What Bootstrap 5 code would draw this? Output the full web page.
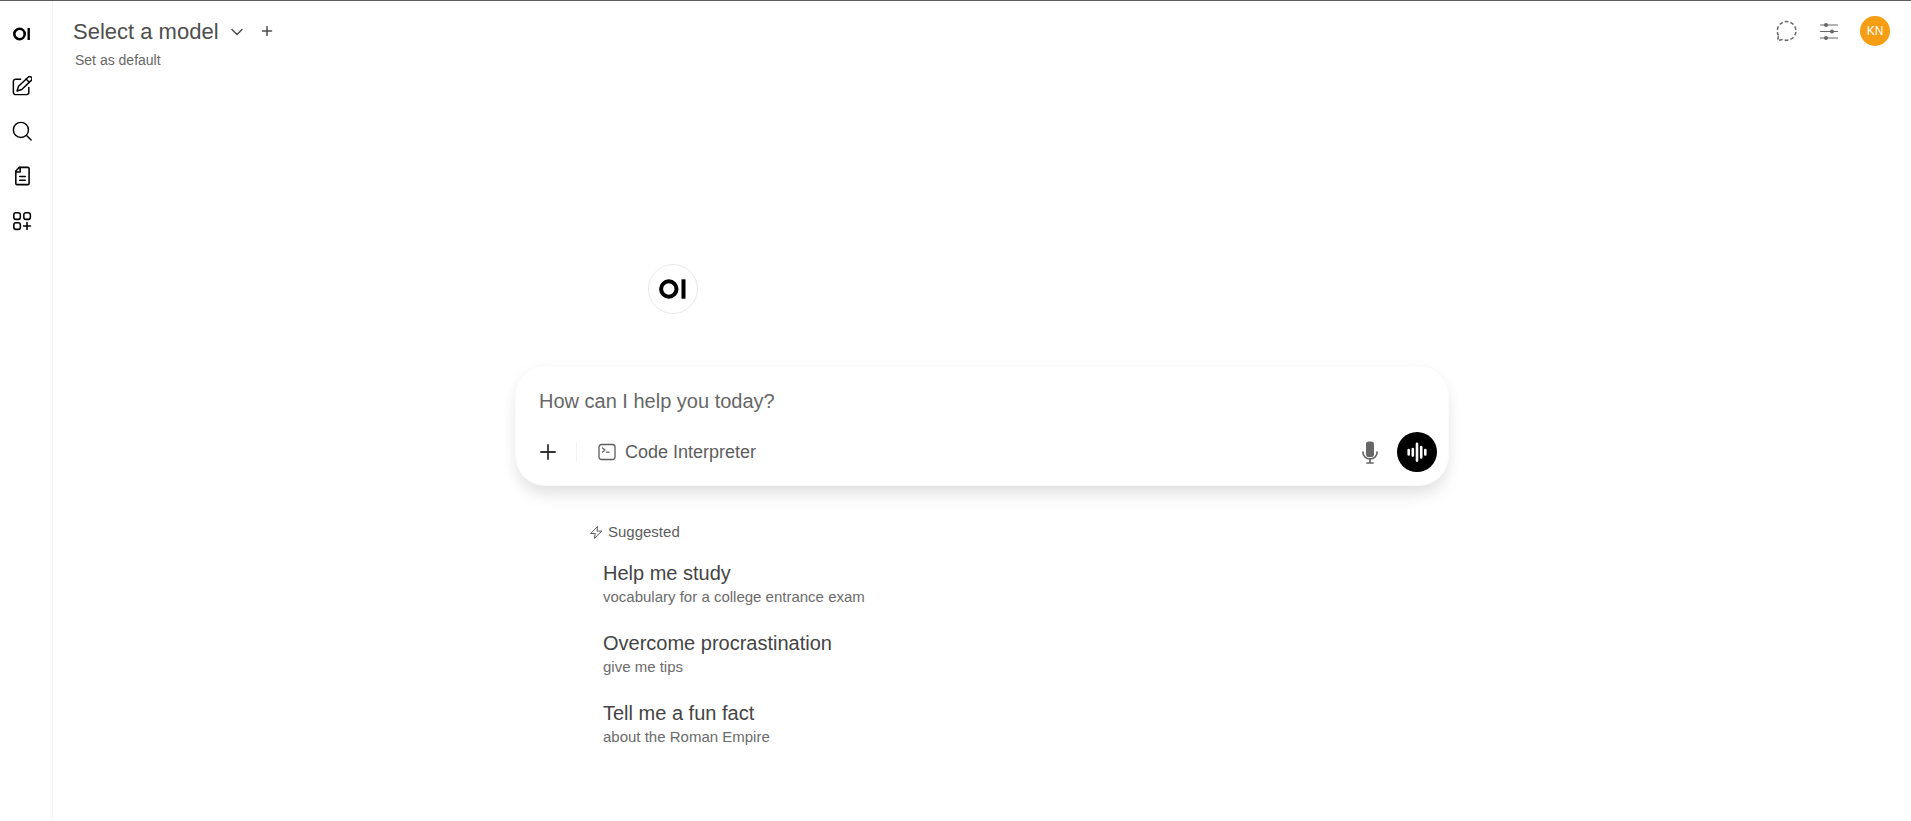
<!DOCTYPE html>
<html lang="en">
<head>
<meta charset="utf-8">
<meta name="viewport" content="width=device-width, initial-scale=1">
<title>New chat</title>
<link href="https://cdn.jsdelivr.net/npm/bootstrap@5.3.0/dist/css/bootstrap.min.css" rel="stylesheet">
<style>
body { font-family: "Liberation Sans", Arial, sans-serif; color: #4e4e4e; background: #fff; }
.app-shell { border-top: 1px solid #5c5c58; }
.side-rail { width: 53px; padding: 16px 8px 0 0; border-right: 1px solid #f5f5f5; }
.rail-nav { gap: 9px; }
.plain-btn { display: flex; align-items: center; justify-content: center; padding: 0; border: 0; background: none; color: inherit; text-decoration: none; }
.rail-item { width: 36px; height: 36px; color: #000; }
.rail-logo { height: 34px; margin-bottom: 8px; }
.top-bar { padding: 15px 21px 0 20px; }
.model-btn { font-size: 22px; line-height: 32px; gap: 12px; }
.add-model { margin-left: 18px; }
.default-btn { font-size: 14px; line-height: 20px; margin: 2px 0 0 2px; color: #676767; }
.top-actions { gap: 21px; color: #676767; }
.avatar { width: 30px; height: 30px; background: #f59e13; color: #fff; font-size: 12px; }
.chat-col { width: 100%; max-width: 934px; margin-top: 194px; }
.brand-mark { width: 50px; height: 50px; margin: 0 0 51px 133px; border: 1px solid #e9e9e9; }
.prompt-box { height: 121px; padding: 19px 11px 13px 23px; border: 1px solid #fafafa; border-radius: 30px; box-shadow: 0 12px 18px -4px rgba(0,0,0,.1), 0 4px 16px rgba(0,0,0,.04); background: #fff; }
.prompt-input { width: 100%; height: 32px; padding: 0; border: 0; outline: 0; resize: none; font-size: 20px; line-height: 32px; overflow: hidden; color: #4e4e4e; }
.prompt-input::placeholder { color: #676767; opacity: 1; }
.tool-divider { width: 1px; height: 20px; margin: 0 21px 0 19px; background: #f3f3f3; }
.tool-btn { gap: 9px; font-size: 18px; line-height: 24px; color: #5d5d5d; }
.mic-btn { margin-right: 18px; color: #676767; }
.voice-btn { width: 40px; height: 40px; background: #000; color: #fff; }
.suggest-area { padding: 36px 75px 0; }
.suggest-head { gap: 5px; font-size: 15px; line-height: 20px; color: #5d5d5d; }
.suggest-list { padding: 18px 0 0 13px; gap: 22px; }
.suggest-item { display: block; width: 100%; padding: 0; border: 0; background: none; text-align: left; }
.suggest-title { font-size: 20px; line-height: 26px; color: #444; }
.suggest-sub { font-size: 15px; line-height: 22px; color: #6b6b6b; }
</style>
</head>
<body>
<div class="app-shell d-flex min-vh-100">
  <aside class="side-rail flex-shrink-0">
    <nav class="rail-nav d-flex flex-column align-items-center" aria-label="Sidebar">
      <a href="#" class="plain-btn rail-item rail-logo" aria-label="Home">
        <svg width="18" height="14" viewBox="0 0 18 14" fill="none" stroke="#000" stroke-width="2.6"><circle cx="6.500" cy="7" r="5.200"/><path d="M15.700 1v12" stroke-width="2.4"/></svg>
      </a>
      <a href="#" class="plain-btn rail-item" aria-label="New chat">
        <svg width="20" height="20" viewBox="1 1 22 22" fill="none" stroke="currentColor" stroke-width="1.600" stroke-linecap="round" stroke-linejoin="round"><path d="M10.500 4.500H5a2.500 2.500 0 0 0-2.500 2.500v12A2.500 2.500 0 0 0 5 21.500h12a2.500 2.500 0 0 0 2.500-2.500v-5.500"/><path d="m18.700 2.300-10.500 10L6.500 17.500l5.200-1.700 10.500-10a2.470 2.470 0 0 0-3.500-3.500Z"/><path d="m16.500 4.300 3.500 3.500"/></svg>
      </a>
      <button type="button" class="plain-btn rail-item" aria-label="Search">
        <svg width="20" height="20" viewBox="1 1 22 22" fill="none" stroke="currentColor" stroke-width="1.600" stroke-linecap="round"><circle cx="10.800" cy="10.800" r="8.300"/><path d="m17 17 5 5"/></svg>
      </button>
      <a href="#" class="plain-btn rail-item" aria-label="Notes">
        <svg width="20" height="20" viewBox="1 1 22 22" fill="none" stroke="currentColor" stroke-width="1.700" stroke-linecap="round" stroke-linejoin="round"><path d="M9 2.500h9.500a1.300 1.300 0 0 1 1.300 1.300v16.400a1.300 1.300 0 0 1-1.300 1.300h-12a1.300 1.300 0 0 1-1.300-1.300V6.500Z"/><path d="M10 2.800v4.700H5.500M9.500 12.500h6M9.500 16.700h6"/></svg>
      </a>
      <a href="#" class="plain-btn rail-item" aria-label="Workspace">
        <svg width="20" height="20" viewBox="1 1 22 22" fill="none" stroke="currentColor" stroke-width="1.700" stroke-linecap="round"><rect x="3" y="3" width="7.200" height="7.200" rx="2.400"/><rect x="14" y="3" width="7.200" height="7.200" rx="2.400"/><rect x="3" y="14" width="7.200" height="7.200" rx="2.400"/><path d="M17.500 13.700v7.600M13.700 17.500h7.600"/></svg>
      </a>
    </nav>
  </aside>

  <div class="flex-grow-1 d-flex flex-column">
    <header class="top-bar d-flex justify-content-between align-items-start">
      <div>
        <div class="d-flex align-items-center">
          <button type="button" class="plain-btn model-btn">Select a model
            <svg width="12" height="12" viewBox="0 0 12 12" fill="none" stroke="currentColor" stroke-width="1.500" stroke-linecap="round" stroke-linejoin="round"><path d="m1 3.500 5 5 5-5"/></svg>
          </button>
          <button type="button" class="plain-btn add-model" aria-label="Add model">
            <svg width="12" height="12" viewBox="0 0 12 12" fill="none" stroke="currentColor" stroke-width="1.500" stroke-linecap="round"><path d="M6 0.500v9M1.500 5h9"/></svg>
          </button>
        </div>
        <button type="button" class="plain-btn default-btn">Set as default</button>
      </div>
      <div class="top-actions d-flex align-items-center">
        <button type="button" class="plain-btn" aria-label="Temporary chat">
          <svg width="22" height="22" viewBox="0 0 22 22" fill="none" stroke="currentColor" stroke-width="1.500"><path d="M2.500 15.500A9.300 9.300 0 1 1 7 19.500L1.700 20.500Z" stroke-dasharray="3.600 2.200"/></svg>
        </button>
        <button type="button" class="plain-btn" aria-label="Controls">
          <svg width="20" height="20" viewBox="0 0 20 20" fill="none" stroke="currentColor" stroke-width="1.200" stroke-linecap="round"><path d="M1.500 4h17M1.500 10.500h17M1.500 17h17"/><g fill="currentColor" stroke="none"><circle cx="7" cy="4" r="2"/><circle cx="13" cy="10.500" r="2"/><circle cx="7" cy="17" r="2"/></g></svg>
        </button>
        <button type="button" class="plain-btn avatar rounded-circle" aria-label="User menu">KN</button>
      </div>
    </header>

    <main class="d-flex flex-column align-items-center px-3">
      <div class="chat-col">
        <div class="brand-mark rounded-circle d-flex align-items-center justify-content-center">
          <svg width="28" height="20" viewBox="0 0 28 20" fill="none" stroke="#000" stroke-width="4"><circle cx="9.800" cy="10" r="7.700"/><path d="M24.500 .3v19.400"/></svg>
        </div>

        <form class="prompt-box d-flex flex-column justify-content-between">
          <textarea class="prompt-input d-block" rows="1" placeholder="How can I help you today?" aria-label="Message"></textarea>
          <div class="d-flex align-items-center">
            <button type="button" class="plain-btn" aria-label="More">
              <svg width="18" height="18" viewBox="0 0 18 18" fill="none" stroke="#333" stroke-width="1.800" stroke-linecap="round"><path d="M9 2v14M2 9h14"/></svg>
            </button>
            <span class="tool-divider"></span>
            <button type="button" class="plain-btn tool-btn">
              <svg width="18" height="18" viewBox="0 0 18 18" fill="none" stroke="currentColor" stroke-width="1.300" stroke-linecap="round" stroke-linejoin="round"><rect x="1" y="1.500" width="16" height="15" rx="2.500"/><path d="m4.500 5 2.500 2-2.500 2M8.500 9.200H11"/></svg>
              Code Interpreter
            </button>
            <div class="d-flex align-items-center ms-auto">
              <button type="button" class="plain-btn mic-btn" aria-label="Dictate">
                <svg width="18" height="24" viewBox="0 0 18 24" fill="none" stroke="currentColor" stroke-width="1.700" stroke-linecap="round"><rect x="5" y="1.500" width="8" height="15.500" rx="2.800" fill="currentColor" stroke="none"/><path d="M2 12v.8a7 6 0 0 0 14 0V12M9 19V23M6 23h6"/></svg>
              </button>
              <button type="button" class="plain-btn voice-btn rounded-circle" aria-label="Voice mode">
                <svg width="20" height="20" viewBox="0 0 20 20" fill="none" stroke="currentColor" stroke-width="2.600" stroke-linecap="round"><path d="M1.700 8.100v4.400M5.800 7v6.600M10 1.800v16.800M14.200 5v10.500M18.300 8.100v4.400"/></svg>
              </button>
            </div>
          </div>
        </form>

        <section class="suggest-area">
          <div class="suggest-head d-flex align-items-center">
            <svg width="13" height="14" viewBox="0 0 13 14" fill="none" stroke="currentColor" stroke-width="1" stroke-linejoin="round"><path d="M7.500 1.500 .6 8.500h4.700L4.300 13.500l7.500-7.400H7Z"/></svg>
            Suggested
          </div>
          <div class="suggest-list d-flex flex-column">
            <button type="button" class="suggest-item"><span class="suggest-title d-block">Help me study</span><span class="suggest-sub d-block">vocabulary for a college entrance exam</span></button>
            <button type="button" class="suggest-item"><span class="suggest-title d-block">Overcome procrastination</span><span class="suggest-sub d-block">give me tips</span></button>
            <button type="button" class="suggest-item"><span class="suggest-title d-block">Tell me a fun fact</span><span class="suggest-sub d-block">about the Roman Empire</span></button>
          </div>
        </section>
      </div>
    </main>
  </div>
</div>
<script src="https://cdn.jsdelivr.net/npm/bootstrap@5.3.0/dist/js/bootstrap.bundle.min.js"></script>
</body>
</html>
